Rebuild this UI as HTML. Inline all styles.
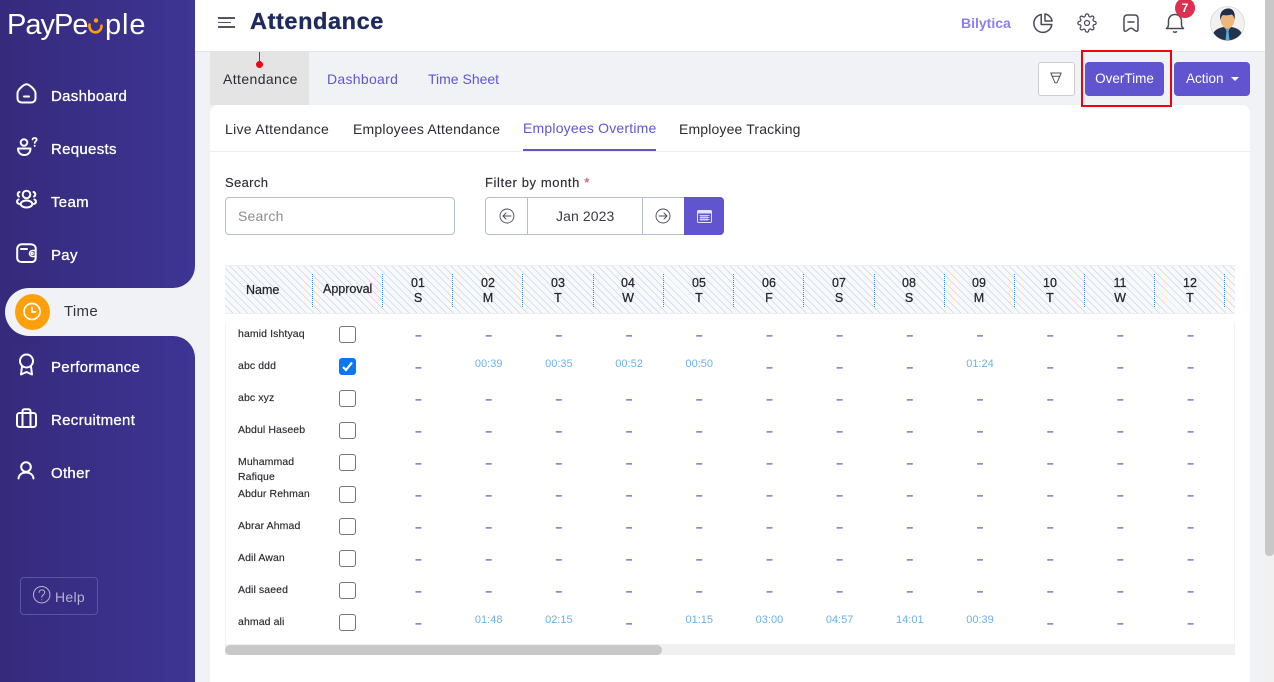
<!DOCTYPE html>
<html><head><meta charset="utf-8"><title>Attendance</title>
<style>
*{box-sizing:border-box;margin:0;padding:0}
html,body{width:1274px;height:682px;overflow:hidden;background:#f1f2f5;font-family:"Liberation Sans",sans-serif}
#p{position:relative;width:1274px;height:682px;overflow:hidden}
.a,.t{position:absolute}
.t{white-space:nowrap}
svg{position:absolute;overflow:visible;fill:none}
.nav{color:#fff;font-size:15px;left:51px;letter-spacing:.3px;-webkit-text-stroke:.3px #fff;line-height:18px}
.ic{stroke:#fff;stroke-width:2;stroke-linecap:round;stroke-linejoin:round}
.tb{stroke:#4a4a55;stroke-width:1.5;stroke-linecap:round;stroke-linejoin:round}
.tab{font-size:14px;letter-spacing:.3px;line-height:18px;color:#2b2b33}
.pu{color:#5f55d8}
.lb{font-size:13px;letter-spacing:.35px;line-height:16px;color:#2d2d35;-webkit-text-stroke:.15px #2d2d35}
.nm{font-size:10.5px;left:238px;line-height:15px;color:#2a2a30;letter-spacing:.1px;-webkit-text-stroke:.15px #2a2a30}
.cb{position:absolute;left:339px;width:17px;height:17px;border:1.5px solid #767676;border-radius:3px;background:#fff}
.r{position:absolute;left:383.4px;height:14px;display:flex}
.r i{display:block;width:70.2px;text-align:center;font-style:normal;font-weight:bold;font-size:12px;line-height:14px;color:#5f52d0}
.r b{display:block;width:70.2px;text-align:center;font-weight:normal;font-size:11px;line-height:14px;color:#6cb2ea;position:relative;top:-3px}
.sep{position:absolute;top:274px;height:33px;border-left:1px dotted #3f8ad8;width:0}
.d{position:absolute;top:276px;width:70px;text-align:center;font-size:12.5px;line-height:15px;color:#25252c;-webkit-text-stroke:.25px #25252c}
</style></head><body><div id="p">

<!-- sidebar -->
<div class="a" style="left:0;top:0;width:195px;height:288px;background:linear-gradient(90deg,#352a7c,#3e3594);border-bottom-right-radius:22px"></div>
<div class="a" style="left:0;top:336px;width:195px;height:346px;background:linear-gradient(90deg,#352a7c,#3e3594);border-top-right-radius:22px"></div>
<div class="a" style="left:0;top:280px;width:40px;height:64px;background:#352a7c"></div>
<div class="a" style="left:5px;top:288px;width:190px;height:48px;background:#f1f2f5;border-radius:24px 0 0 24px"></div>

<!-- logo -->
<div class="t" style="left:7px;top:7px;font-size:29px;line-height:36px;color:#fff;letter-spacing:-1px">PayPe</div>
<div class="t" style="left:105px;top:7px;font-size:29px;line-height:36px;color:#fff;letter-spacing:.9px">ple</div>
<svg style="left:87px;top:17px" width="18" height="18" viewBox="0 0 18 18"><circle cx="9" cy="3.5" r="2.2" fill="#ff9f0a"/><path d="M2.5 7.5c-.6 4.500 2 7.500 5.600 7.800 3.600.2 6.400-2.600 6.400-6.600" stroke="#ff9f0a" stroke-width="2.600" stroke-linecap="round"/></svg>

<!-- nav icons -->
<svg class="ic" style="left:16px;top:83px" width="21" height="21" viewBox="0 0 21 21"><path d="M10.5 1.3C13 1.3 19.5 6.5 19.5 10.5v4.5c0 2.800-1.800 4.500-4.500 4.500H6c-2.700 0-4.500-1.700-4.500-4.500v-4.500C1.500 6.500 8 1.300 10.500 1.300z"/><path d="M8 13.500h5"/></svg>
<div class="t nav" style="top:88px">Dashboard</div>
<svg class="ic" style="left:16px;top:136px" width="22" height="22" viewBox="0 0 22 22"><circle cx="8" cy="6.500" r="3.300"/><path d="M2 12.500h12.500c0 4-2.500 6.500-6.200 6.500S2 16.500 2 12.500z"/><path d="M16.500 3.500c.3-2 4-2.200 4.200 0 .1 1.700-2 1.800-2 3.500" stroke-width="1.700"/><path d="M18.700 9.800v.1" stroke-width="2"/></svg>
<div class="t nav" style="top:141px">Requests</div>
<svg class="ic" style="left:16px;top:189px" width="21" height="21" viewBox="0 0 21 21" stroke-width="1.800"><circle cx="10.500" cy="5.500" r="3.800"/><path d="M3.500 3c-2 .5-2.500 3.500-.5 4.500M17.500 3c2 .5 2.500 3.500.5 4.500"/><ellipse cx="10.500" cy="15" rx="5.800" ry="3.500"/><path d="M2.500 10.500C.5 11.500.5 14 3 15M18.500 10.500c2 1 2 3.500-.500 4.500"/></svg>
<div class="t nav" style="top:194px">Team</div>
<svg class="ic" style="left:16px;top:243px" width="21" height="21" viewBox="0 0 21 21"><path d="M16 19H5.500C3 19 1.200 17.300 1.200 15V6c0-2.800 2-4.700 4.800-4.700h8.500c3 0 5 1.700 5.200 4v9.500C19.700 17.200 18.500 19 16 19z"/><path d="M5 6h6"/><path d="M19.500 7.500h-3a3 3 0 0 0 0 6h3z" stroke-width="1.600"/><circle cx="16.300" cy="10.500" r=".6"/></svg>
<div class="t nav" style="top:247px">Pay</div>

<!-- time -->
<div class="a" style="left:15px;top:294px;width:35px;height:36px;border-radius:50%;background:#ff9f0a"></div>
<svg style="left:22px;top:302px" width="20" height="20" viewBox="0 0 20 20" stroke="#fff" stroke-width="1.700" stroke-linecap="round" stroke-linejoin="round"><circle cx="10" cy="9.500" r="8"/><path d="M10 5.500V10h3.500"/></svg>
<div class="t" style="left:64px;top:303px;font-size:15px;line-height:18px;color:#33333d;letter-spacing:.3px">Time</div>

<svg class="ic" style="left:17px;top:353px" width="20" height="25" viewBox="0 0 20 25"><circle cx="9.500" cy="8" r="6.500"/><path d="M5 13.500L4 21.500l5.500-2.500 5.500 2.500-1-8"/></svg>
<div class="t nav" style="top:359px">Performance</div>
<svg class="ic" style="left:16px;top:408px" width="21" height="20" viewBox="0 0 21 20"><rect x="1" y="5" width="19" height="14" rx="2.500"/><path d="M6.500 5v14M14.500 5v14M6.500 5V3.200C6.500 2 7.300 1.200 8.500 1.200h4c1.200 0 2 .8 2 2V5"/></svg>
<div class="t nav" style="top:412px">Recruitment</div>
<svg class="ic" style="left:17px;top:461px" width="19" height="20" viewBox="0 0 19 20"><circle cx="9" cy="6" r="4.800"/><path d="M1.500 17.500c.5-4 3.500-6 7.500-6s7 2 7.500 6"/></svg>
<div class="t nav" style="top:465px">Other</div>

<!-- help -->
<div class="a" style="left:20px;top:577px;width:78px;height:38px;border:1px solid #5b53a8;border-radius:4px"></div>
<svg style="left:33px;top:586px" width="18" height="18" viewBox="0 0 18 18" stroke="#b5b3cf" stroke-width="1" stroke-linecap="round"><circle cx="8.700" cy="8.700" r="8.200"/><path d="M6 6.500c.2-3.500 5.500-3.500 5.700-.2.100 2.500-2.900 2.500-2.900 5"/><path d="M8.800 13.800v.1"/></svg>
<div class="t" style="left:55px;top:589px;font-size:14px;line-height:17px;color:#b5b3cf;letter-spacing:.3px">Help</div>

<!-- topbar -->
<div class="a" style="left:195px;top:0;width:1070px;height:52px;background:#fff;border-bottom:1px solid #e2e4e9"></div>
<div class="a" style="left:218px;top:17px;width:17px;height:1.500px;background:#55555f"></div>
<div class="a" style="left:218px;top:21.500px;width:13px;height:1.500px;background:#55555f"></div>
<div class="a" style="left:218px;top:26px;width:17px;height:1.500px;background:#55555f"></div>
<div class="t" style="left:250px;top:8px;font-size:23.500px;line-height:27px;font-weight:bold;color:#1f2a5c;letter-spacing:.6px;-webkit-text-stroke:.35px #1f2a5c">Attendance</div>
<div class="t" style="left:961px;top:15px;font-size:14px;line-height:17px;font-weight:bold;color:#8b80ee;letter-spacing:0">Bilytica</div>

<svg class="tb" style="left:1033px;top:13px" width="20" height="20" viewBox="0 0 20 20"><path d="M18.800 11.500A9 9 0 1 1 8.200 1.500V11.500z"/><path d="M12 1c3.500.4 6.600 3.600 7 7h-7z"/></svg>
<svg class="tb" style="left:1077px;top:13px" width="20" height="20" viewBox="0 0 24 24" stroke-width="1.800"><circle cx="12" cy="12" r="3"/><path d="M19.400 15a1.650 1.650 0 0 0 .33 1.820l.06.06a2 2 0 0 1 0 2.830 2 2 0 0 1-2.830 0l-.06-.06a1.650 1.650 0 0 0-1.820-.33 1.650 1.650 0 0 0-1 1.510V21a2 2 0 0 1-2 2 2 2 0 0 1-2-2v-.09A1.650 1.650 0 0 0 9 19.400a1.650 1.650 0 0 0-1.820.33l-.06.06a2 2 0 0 1-2.830 0 2 2 0 0 1 0-2.830l.06-.06a1.650 1.650 0 0 0 .33-1.820 1.650 1.650 0 0 0-1.510-1H3a2 2 0 0 1-2-2 2 2 0 0 1 2-2h.09A1.650 1.650 0 0 0 4.600 9a1.650 1.650 0 0 0-.33-1.820l-.06-.06a2 2 0 0 1 0-2.830 2 2 0 0 1 2.830 0l.06.06a1.650 1.650 0 0 0 1.820.33H9a1.650 1.650 0 0 0 1-1.510V3a2 2 0 0 1 2-2 2 2 0 0 1 2 2v.09a1.650 1.650 0 0 0 1 1.510 1.650 1.650 0 0 0 1.820-.33l.06-.06a2 2 0 0 1 2.830 0 2 2 0 0 1 0 2.830l-.06.06a1.650 1.650 0 0 0-.33 1.820V9a1.650 1.650 0 0 0 1.510 1H21a2 2 0 0 1 2 2 2 2 0 0 1-2 2h-.09a1.650 1.650 0 0 0-1.510 1z"/></svg>
<svg class="tb" style="left:1123px;top:14px" width="16" height="19" viewBox="0 0 16 19"><path d="M1 15.500V4.500C1 2.300 2.300 1 4.500 1h7C13.700 1 15 2.300 15 4.500v11c0 1.800-1.500 2.200-2.800 1.200L10 15c-1.300-1-2.700-1-4 0l-2.200 1.700C2.500 17.700 1 17.300 1 15.500z"/><path d="M5 8h6"/></svg>
<svg class="tb" style="left:1165px;top:13px" width="20" height="21" viewBox="0 0 20 21"><path d="M1.500 15.500c1.200-1 2-2 2-4V8c0-3.800 2.800-6.500 6.500-6.500S16.500 4.200 16.500 8v3.500c0 2 .8 3 2 4z"/><path d="M8.500 18.800c.8.500 2.200.5 3 0"/></svg>
<div class="a" style="left:1175px;top:-2px;width:20px;height:20px;border-radius:50%;background:#dc3050;color:#fff;font-size:12px;line-height:20px;font-weight:bold;text-align:center">7</div>

<svg style="left:1210px;top:6px" width="35" height="35" viewBox="0 0 35 35"><circle cx="17.500" cy="17.500" r="17" fill="#f3f1ee" stroke="#cfcfcf" stroke-width=".6"/><path d="M3.500 27c2-4 6-5 10-6h8c4 1 8 2 10 6a17 17 0 0 1-28 0z" fill="#22344f"/><path d="M13.500 21l4 3.500 4-3.500v-5h-8z" fill="#dba66e"/><path d="M15.500 23.500l2-1 2 1-1 1.500 1 9h-4l1-9z" fill="#5aa9de"/><ellipse cx="17.500" cy="13.500" rx="7" ry="8.500" fill="#efb77c"/><path d="M10.500 14c-1.500-7 2-11 7-11.500 5-.5 8.500 3.500 7 11.500-.5-3.500-1.500-5-3-5.500-3 1-7 1-8.500.5-1.500 1-2 2.500-2.500 5z" fill="#1e2f4d"/></svg>

<!-- sub header tabs -->
<div class="a" style="left:210px;top:52px;width:99px;height:53px;background:#e4e4e4"></div>
<div class="a" style="left:259px;top:52px;width:1px;height:10px;background:#e0101c"></div>
<div class="a" style="left:256px;top:61px;width:7px;height:7px;border-radius:50%;background:#f00012"></div>
<div class="t tab" style="left:223px;top:70px;letter-spacing:.4px">Attendance</div>
<div class="t tab pu" style="left:327px;top:70px">Dashboard</div>
<div class="t tab pu" style="left:428px;top:70px;letter-spacing:0">Time Sheet</div>

<!-- card -->
<div class="a" style="left:210px;top:105px;width:1040px;height:600px;background:#fff;border-radius:8px"></div>

<div class="a" style="left:1038px;top:62px;width:37px;height:34px;background:#fff;border:1px solid #ccc;border-radius:3px"></div>
<svg style="left:1050px;top:72px" width="12" height="12" viewBox="0 0 12 12" stroke="#555" stroke-width="1" stroke-linejoin="round"><path d="M.8 1h10.400L7 10.800H5zM2.200 4.200h7.600"/></svg>
<div class="a" style="left:1081px;top:50px;width:91px;height:57px;border:2.500px solid #f0000f"></div>
<div class="a" style="left:1085px;top:62px;width:79px;height:34px;background:#6054cf;border-radius:4px;color:#fff;font-size:13.500px;line-height:33px;text-align:center">OverTime</div>
<div class="a" style="left:1174px;top:62px;width:76px;height:34px;background:#6054cf;border-radius:4px"></div>
<div class="t" style="left:1186px;top:71px;font-size:13.500px;line-height:16px;color:#fff">Action</div>
<div class="a" style="left:1231px;top:77px;border:4px solid transparent;border-top:4px solid #fff;border-bottom:0"></div>

<div class="a" style="left:210px;top:151px;width:1040px;height:1px;background:#eceef1"></div>
<div class="t tab" style="left:225px;top:120px">Live Attendance</div>
<div class="t tab" style="left:353px;top:120px;letter-spacing:.2px">Employees Attendance</div>
<div class="t tab pu" style="left:523px;top:119px;letter-spacing:.2px">Employees Overtime</div>
<div class="a" style="left:523px;top:149px;width:133px;height:2px;background:#5f55d0"></div>
<div class="t tab" style="left:679px;top:120px;letter-spacing:.15px">Employee Tracking</div>

<!-- filters -->
<div class="t lb" style="left:225px;top:175px">Search</div>
<div class="a" style="left:225px;top:197px;width:230px;height:38px;border:1px solid #b4bfd0;border-radius:4px;background:#fff"></div>
<div class="t" style="left:238px;top:208px;font-size:14px;line-height:17px;color:#8c8c92;letter-spacing:.2px">Search</div>
<div class="t lb" style="left:485px;top:175px;letter-spacing:.6px">Filter by month <span style="color:#f66">*</span></div>
<div class="a" style="left:485px;top:197px;width:200px;height:38px;border:1px solid #b4bfd0;border-radius:4px 0 0 4px;background:#fff"></div>
<div class="a" style="left:527px;top:197px;width:1px;height:38px;background:#b4bfd0"></div>
<div class="a" style="left:642px;top:197px;width:1px;height:38px;background:#b4bfd0"></div>
<svg style="left:499px;top:208px" width="16" height="16" viewBox="0 0 16 16" stroke="#4a4a55" stroke-width=".9" stroke-linecap="round" stroke-linejoin="round"><circle cx="8" cy="8" r="7"/><path d="M12 8H4M7 5L4 8l3 3"/></svg>
<svg style="left:655px;top:208px" width="16" height="16" viewBox="0 0 16 16" stroke="#4a4a55" stroke-width=".9" stroke-linecap="round" stroke-linejoin="round"><circle cx="8" cy="8" r="7"/><path d="M4 8h8M9 5l3 3-3 3"/></svg>
<div class="t" style="left:556px;top:208px;font-size:14px;line-height:17px;color:#3a3a42;letter-spacing:.1px">Jan 2023</div>
<div class="a" style="left:684px;top:197px;width:40px;height:38px;background:#6054cf;border-radius:0 4px 4px 0"></div>
<svg style="left:697px;top:209px" width="15" height="14" viewBox="0 0 15 14"><rect x=".5" y="1.500" width="14" height="12" rx="1" stroke="#dfe6f7" stroke-width="1"/><rect x=".5" y="1.500" width="14" height="3" fill="#dfe6f7"/><path d="M2.500 6.500h10M2.500 8.500h10M2.500 10.500h10M4 6v6M6 6v6M8 6v6M10 6v6" stroke="#dfe6f7" stroke-width=".8"/></svg>

<!-- table header -->
<div class="a" style="left:225px;top:265px;width:1010px;height:49px;background-color:#f8f9fb;background-image:repeating-linear-gradient(45deg,#cbd5e8 0,#cbd5e8 .7px,transparent .7px,transparent 5.200px);border-top:1px solid #eeeff1;border-bottom:1px solid #eeeff1"></div>
<div class="sep" style="left:312px"></div><div class="sep" style="left:382px"></div><div class="sep" style="left:452px"></div><div class="sep" style="left:522px"></div><div class="sep" style="left:593px"></div><div class="sep" style="left:663px"></div><div class="sep" style="left:733px"></div><div class="sep" style="left:803px"></div><div class="sep" style="left:874px"></div><div class="sep" style="left:944px"></div><div class="sep" style="left:1014px"></div><div class="sep" style="left:1084px"></div><div class="sep" style="left:1154px"></div><div class="sep" style="left:1224px"></div>
<div class="t" style="left:246px;top:283px;font-size:12.500px;line-height:15px;color:#25252c;-webkit-text-stroke:.25px #25252c">Name</div>
<div class="t" style="left:323px;top:282px;font-size:12.500px;line-height:15px;color:#25252c;-webkit-text-stroke:.25px #25252c">Approval</div>
<div class="d" style="left:383px">01<br>S</div><div class="d" style="left:453px">02<br>M</div><div class="d" style="left:523px">03<br>T</div><div class="d" style="left:593px">04<br>W</div><div class="d" style="left:664px">05<br>T</div><div class="d" style="left:734px">06<br>F</div><div class="d" style="left:804px">07<br>S</div><div class="d" style="left:874px">08<br>S</div><div class="d" style="left:944px">09<br>M</div><div class="d" style="left:1015px">10<br>T</div><div class="d" style="left:1085px">11<br>W</div><div class="d" style="left:1155px">12<br>T</div>

<!-- table borders -->
<div class="a" style="left:225px;top:323px;width:1px;height:321px;background:#f3f3f3"></div>
<div class="a" style="left:1234px;top:323px;width:1px;height:321px;background:#f3f3f3"></div>

<!-- names -->
<div class="t nm" style="top:327px">hamid Ishtyaq</div>
<div class="t nm" style="top:359px">abc ddd</div>
<div class="t nm" style="top:391px">abc xyz</div>
<div class="t nm" style="top:423px">Abdul Haseeb</div>
<div class="t nm" style="top:455px">Muhammad</div>
<div class="t nm" style="top:470px">Rafique</div>
<div class="t nm" style="top:487px">Abdur Rehman</div>
<div class="t nm" style="top:519px">Abrar Ahmad</div>
<div class="t nm" style="top:551px">Adil Awan</div>
<div class="t nm" style="top:583px">Adil saeed</div>
<div class="t nm" style="top:615px">ahmad ali</div>

<!-- checkboxes -->
<div class="cb" style="top:326px"></div>
<div class="cb" style="top:358px;background:#0a75f5;border-color:#0a75f5"></div>
<svg style="left:341px;top:360px" width="13" height="13" viewBox="0 0 13 13"><path d="M2 7l3 3 6-7.500" stroke="#fff" stroke-width="2.200"/></svg>
<div class="cb" style="top:390px"></div>
<div class="cb" style="top:422px"></div>
<div class="cb" style="top:454px"></div>
<div class="cb" style="top:486px"></div>
<div class="cb" style="top:518px"></div>
<div class="cb" style="top:550px"></div>
<div class="cb" style="top:582px"></div>
<div class="cb" style="top:614px"></div>

<!-- rows -->
<div class="r" style="top:328px"><i>–</i><i>–</i><i>–</i><i>–</i><i>–</i><i>–</i><i>–</i><i>–</i><i>–</i><i>–</i><i>–</i><i>–</i></div>
<div class="r" style="top:360px"><i>–</i><b>00:39</b><b>00:35</b><b>00:52</b><b>00:50</b><i>–</i><i>–</i><i>–</i><b>01:24</b><i>–</i><i>–</i><i>–</i></div>
<div class="r" style="top:392px"><i>–</i><i>–</i><i>–</i><i>–</i><i>–</i><i>–</i><i>–</i><i>–</i><i>–</i><i>–</i><i>–</i><i>–</i></div>
<div class="r" style="top:424px"><i>–</i><i>–</i><i>–</i><i>–</i><i>–</i><i>–</i><i>–</i><i>–</i><i>–</i><i>–</i><i>–</i><i>–</i></div>
<div class="r" style="top:456px"><i>–</i><i>–</i><i>–</i><i>–</i><i>–</i><i>–</i><i>–</i><i>–</i><i>–</i><i>–</i><i>–</i><i>–</i></div>
<div class="r" style="top:488px"><i>–</i><i>–</i><i>–</i><i>–</i><i>–</i><i>–</i><i>–</i><i>–</i><i>–</i><i>–</i><i>–</i><i>–</i></div>
<div class="r" style="top:520px"><i>–</i><i>–</i><i>–</i><i>–</i><i>–</i><i>–</i><i>–</i><i>–</i><i>–</i><i>–</i><i>–</i><i>–</i></div>
<div class="r" style="top:552px"><i>–</i><i>–</i><i>–</i><i>–</i><i>–</i><i>–</i><i>–</i><i>–</i><i>–</i><i>–</i><i>–</i><i>–</i></div>
<div class="r" style="top:584px"><i>–</i><i>–</i><i>–</i><i>–</i><i>–</i><i>–</i><i>–</i><i>–</i><i>–</i><i>–</i><i>–</i><i>–</i></div>
<div class="r" style="top:616px"><i>–</i><b>01:48</b><b>02:15</b><i>–</i><b>01:15</b><b>03:00</b><b>04:57</b><b>14:01</b><b>00:39</b><i>–</i><i>–</i><i>–</i></div>

<!-- h scrollbar -->
<div class="a" style="left:225px;top:644px;width:1010px;height:11px;background:#f0f0f0"></div>
<div class="a" style="left:225px;top:645px;width:437px;height:10px;background:#c8c8c8;border-radius:5px"></div>

<!-- v scrollbar -->
<div class="a" style="left:1265px;top:0;width:9px;height:682px;background:#f1f1f1"></div>
<div class="a" style="left:1265px;top:0;width:9px;height:556px;background:#c8c8c8;border-radius:0 0 4px 4px"></div>
</div></body></html>
